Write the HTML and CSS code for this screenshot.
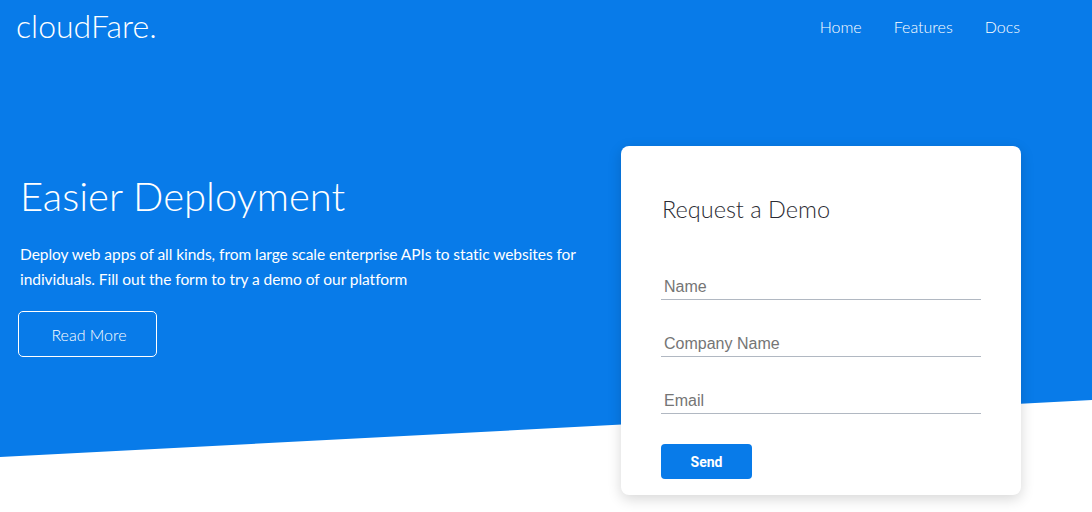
FILE: index.html
```html
<!DOCTYPE html>
<html lang="en">
<head>
<meta charset="utf-8">
<title>cloudFare.</title>
<link rel="stylesheet" href="styles.css">
</head>
<body>
<div class="page">
  <header class="topbar">
    <div class="logo">cloudFare.</div>
    <nav class="nav">
      <a href="#">Home</a>
      <a href="#">Features</a>
      <a href="#">Docs</a>
    </nav>
  </header>
  <main class="hero">
    <section class="intro">
      <h1>Easier Deployment</h1>
      <p>Deploy web apps of all kinds, from large scale enterprise APIs to static websites for individuals. Fill out the form to try a demo of our platform</p>
      <a class="btn-outline" href="#">Read More</a>
    </section>
    <form class="card">
      <h2>Request a Demo</h2>
      <input class="field" type="text" placeholder="Name">
      <input class="field" type="text" placeholder="Company Name">
      <input class="field" type="email" placeholder="Email">
      <button class="send" type="button">Send</button>
    </form>
  </main>
</div>
</body>
</html>
```
FILE: styles.css
```css
* { box-sizing: border-box; }
html, body { margin: 0; padding: 0; }
body {
  font-family: Lato, "Open Sans", sans-serif;
  color: #fff;
  background: #fff;
  width: 1092px;
  height: 512px;
  overflow: hidden;
}
.page {
  position: relative;
  min-height: 512px;
}
.page::before {
  content: "";
  position: absolute;
  left: 0; top: 0; right: 0;
  height: 460px;
  background: #087be9;
  clip-path: polygon(0 0, 100% 0, 100% 400px, 0 457px);
  z-index: 0;
}
.topbar {
  position: relative;
  z-index: 1;
  height: 54px;
  display: flex;
  align-items: center;
  justify-content: space-between;
  padding: 0 72px 0 16px;
}
.logo {
  font-size: 32px;
  font-weight: 300;
  line-height: 38px;
  margin-top: -2px;
}
.nav {
  display: flex;
  gap: 32px;
  margin-top: -2px;
}
.nav a {
  color: #fff;
  text-decoration: none;
  font-size: 16px;
  font-weight: 300;
}
.hero {
  position: relative;
  z-index: 1;
  display: flex;
  justify-content: space-between;
  align-items: flex-start;
  padding: 92px 71px 0 20px;
}
.intro {
  width: 580px;
  padding-top: 26px;
}
.intro h1 {
  margin: 0;
  font-size: 40px;
  font-weight: 300;
  line-height: 48px;
}
.intro p {
  margin: 22px 0 19px;
  font-size: 15.5px;
  font-weight: 400;
  line-height: 25px;
  letter-spacing: -0.05px;
}
.btn-outline {
  display: inline-flex;
  align-items: center;
  justify-content: center;
  width: 139px;
  height: 46px;
  margin-left: -2px;
  padding-left: 3px;
  border: 1px solid #fff;
  border-radius: 5px;
  color: #fff;
  text-decoration: none;
  font-size: 16px;
  font-weight: 300;
}
.card {
  width: 400px;
  height: 349px;
  background: #fff;
  border-radius: 8px;
  box-shadow: 0 4px 14px rgba(0, 0, 0, 0.16);
  padding: 49px 40px 15px 40px;
  display: flex;
  flex-direction: column;
  align-items: flex-start;
}
.card h2 {
  margin: 0 0 46px 1px;
  font-size: 23.5px;
  font-weight: 300;
  color: #2b2b33;
}
.field {
  width: 320px;
  height: 31px;
  border: none;
  border-bottom: 1px solid #b1b8c2;
  padding: 9px 3px 3px 3px;
  margin-bottom: 26px;
  font-family: "Liberation Sans", Arial, sans-serif;
  font-size: 16px;
  color: #333;
  outline: none;
  background: transparent;
}
.field::placeholder { color: #757575; }
.field:last-of-type { margin-bottom: 30px; }
.send {
  width: 91px;
  height: 35px;
  border: none;
  border-radius: 4px;
  background: #087be9;
  color: #fff;
  font-family: Roboto, "Liberation Sans", sans-serif;
  font-weight: 700;
  font-size: 14px;
  cursor: pointer;
}
```
